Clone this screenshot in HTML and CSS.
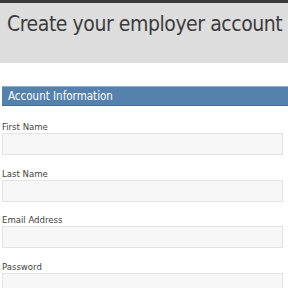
FILE: index.html
```html
<!DOCTYPE html>
<html lang="en">
<head>
    <meta charset="UTF-8">
    <meta name="viewport" content="width=device-width, initial-scale=1.0">
    <title>Create your employer account</title>
    <link rel="stylesheet" href="styles.css">
</head>
<body>
    <div class="page-header">
        <h1>Create your employer account</h1>
    </div>

    <form class="signup-form">
        <div class="section-title">Account Information</div>

        <div class="field">
            <label for="first-name">First Name</label>
            <input type="text" id="first-name">
        </div>
        <div class="field">
            <label for="last-name">Last Name</label>
            <input type="text" id="last-name">
        </div>
        <div class="field">
            <label for="email">Email Address</label>
            <input type="email" id="email">
        </div>
        <div class="field">
            <label for="password">Password</label>
            <input type="password" id="password">
        </div>
    </form>
</body>
</html>
```

FILE: styles.css
```css
body {
    margin: 0;
    font-family: "DejaVu Sans Condensed", "DejaVu Sans", Verdana, sans-serif;
    color: #333;
    background-color: white;
    overflow: hidden;
}

.page-header {
    border-top: 3px solid #3a3a3a;
    background-color: #dddddd;
    height: 63px;
    padding: 8px 7px 0;
    box-sizing: border-box;
}

.page-header h1 {
    margin: 0;
    font-weight: normal;
    font-size: 21px;
    letter-spacing: -0.45px;
    line-height: 26px;
    color: #3c3c3c;
    white-space: nowrap;
}

.signup-form {
    padding: 23px 0 0 2px;
}

.section-title {
    background-color: #5581ad;
    border-top: 1px solid #8fb0d0;
    border-bottom: 1px solid #4a6f96;
    color: white;
    font-size: 11.5px;
    height: 18px;
    line-height: 18px;
    padding-left: 6px;
    margin-bottom: 15px;
}

.field {
    display: flex;
    flex-direction: column;
    margin-bottom: 12.5px;
}

.field label {
    font-size: 9.5px;
    line-height: 12px;
    color: #444;
}

.field input {
    width: 281px;
    height: 22px;
    margin: 0;
    box-sizing: border-box;
    background-color: #f7f7f7;
    border: 1px solid #e3e3e3;
}
```
